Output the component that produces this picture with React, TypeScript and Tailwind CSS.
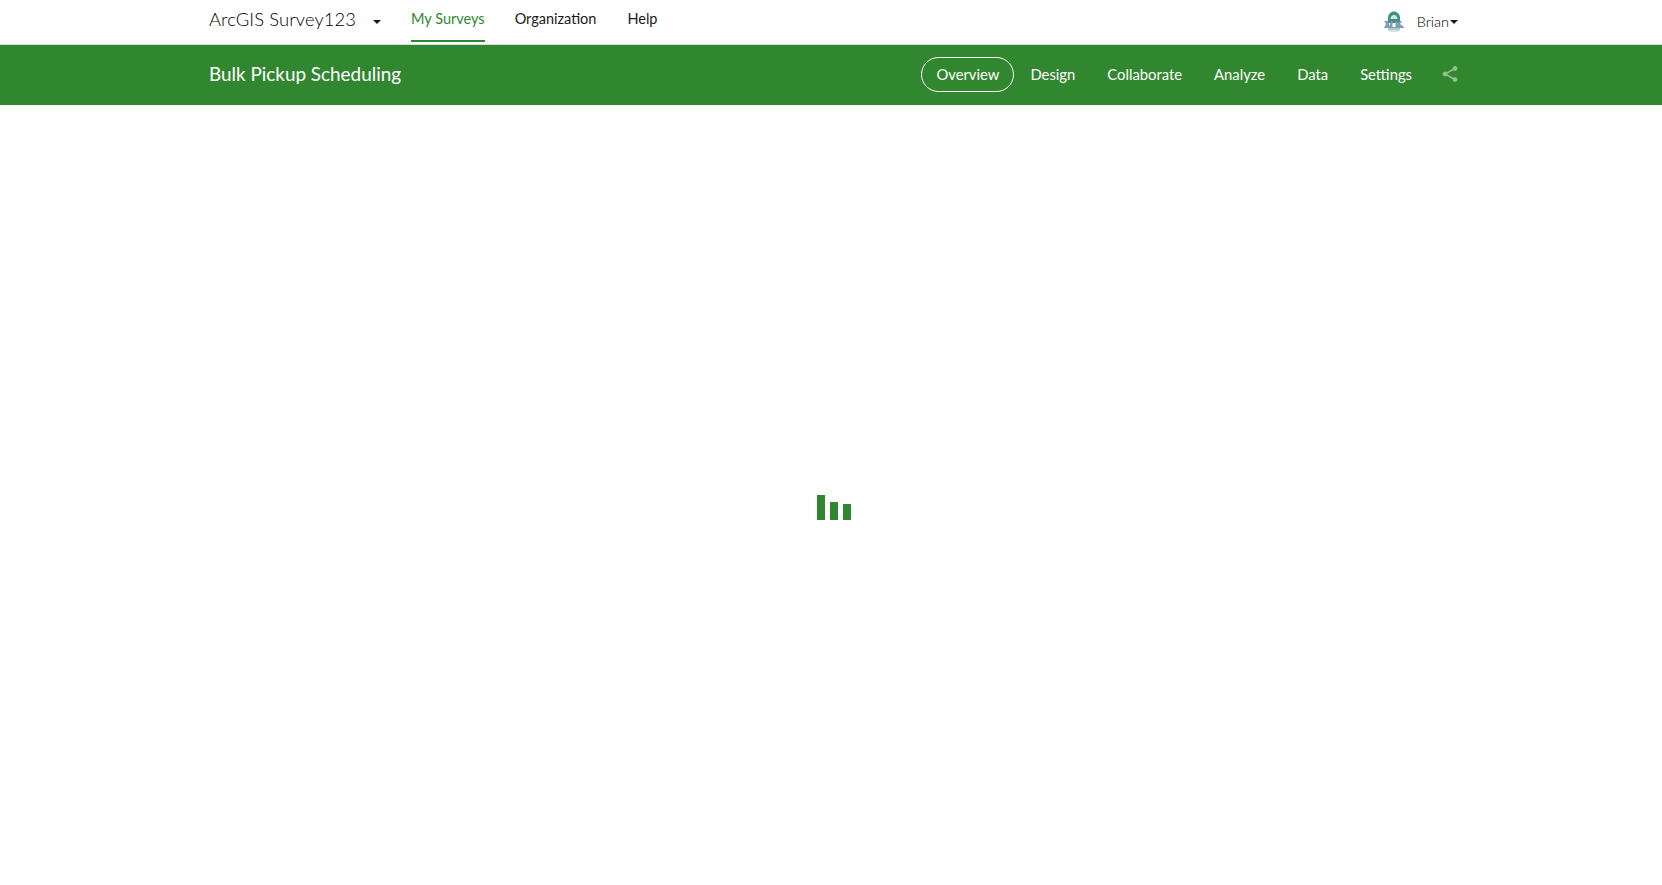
import React from 'react'

const topLinks = ['Organization', 'Help']
const surveyLinks = ['Design', 'Collaborate', 'Analyze', 'Data', 'Settings']

function Caret({ className }: { className?: string }) {
  return (
    <svg className={className} width="8" height="4" viewBox="0 0 8 4">
      <path d="M0 0H8L4 4Z" fill="#1a1a1a" />
    </svg>
  )
}

function Avatar() {
  return (
    <svg width="22" height="24" viewBox="0 0 22 24">
      <path d="M5 13V8C5 4 8 1.500 11 1.500S17 4 17 8V13Z" fill="#3f8f86" />
      <path d="M7.500 9C7.500 6.500 9.300 5 11 5S14.500 6.500 14.500 9Z" fill="#cfe6de" />
      <path d="M1 11H5L6.500 16L8 11H9.500V17H12.500V11H14V14L16.500 11H19L17 14L21 17V18H1L3 14Z" fill="#7f9cbd" />
      <rect x="5" y="18" width="12" height="2.500" fill="#a9cdbb" />
      <rect x="7" y="20.500" width="8" height="1.500" fill="#d5dfe8" />
    </svg>
  )
}

export default function App() {
  return (
    <div className="min-h-[885px] bg-white font-['Lato','Open_Sans',sans-serif]">
      <header className="h-[45px] border-b border-[#dcdcdc]">
        <div className="ml-[209px] flex h-full w-[1249px] items-center">
          <span className="-mt-1 text-[18.400px] font-light tracking-[0.1px] text-black">ArcGIS Survey123</span>
          <Caret className="ml-[17px]" />
          <nav className="ml-[30px] flex h-full text-[14.500px] text-[#1a1a1a]">
            <a className="flex h-[42px] items-center border-b-2 border-[#31872f] pb-[2px] text-[#31872f]">My Surveys</a>
            <a className="ml-[30px] flex h-[42px] items-center pb-1">{topLinks[0]}</a>
            <a className="ml-[31px] flex h-[42px] items-center pb-1">{topLinks[1]}</a>
          </nav>
          <div className="ml-auto flex items-center">
            <Avatar />
            <span className="ml-[12px] text-[14.500px] font-light text-black">Brian</span>
            <Caret className="ml-px" />
          </div>
        </div>
      </header>
      <div className="h-[60px] bg-[#31872f]">
        <div className="ml-[209px] flex h-full w-[1251px] items-center pb-[2px] text-white">
          <span className="text-[18.900px]">Bulk Pickup Scheduling</span>
          <nav className="ml-auto flex items-center text-[14.800px]">
            <a className="mr-4 flex h-[35px] items-center rounded-full border border-white px-[14px]">Overview</a>
            <div className="flex gap-8">
              {surveyLinks.map((link) => (
                <a key={link}>{link}</a>
              ))}
            </div>
            <svg className="ml-[30px]" width="18" height="18" viewBox="1 0 18 18" fill="#8fc08d" stroke="#8fc08d">
              <path d="M14 3.500L4 9L14 14.500" fill="none" strokeWidth="1.500" />
              <circle cx="14" cy="3.500" r="2" />
              <circle cx="4" cy="9" r="2" />
              <circle cx="14" cy="14.500" r="2" />
            </svg>
          </nav>
        </div>
      </div>
      <main className="flex justify-center pt-[390px]">
        <div className="ml-[6px] flex h-[25px] items-end gap-[5px]">
          <div className="h-[25px] w-2 bg-[#31872f]" />
          <div className="h-[18px] w-2 bg-[#31872f]" />
          <div className="h-4 w-2 bg-[#31872f]" />
        </div>
      </main>
    </div>
  )
}
